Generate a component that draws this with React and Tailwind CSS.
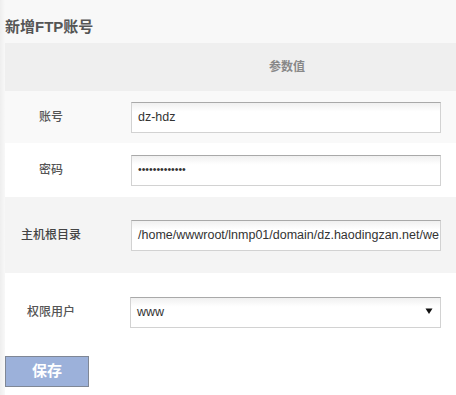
export default function App() {
  const font = { fontFamily: '"Liberation Sans", "Noto Sans CJK SC", sans-serif' };
  const inputCls =
    "h-[31px] border border-[#d2d2d2] border-t-[#a9a9a9] bg-gradient-to-b from-[#f0f0f0] to-white to-[30%] flex items-center pl-[6px] text-[12.5px] text-[#333] overflow-hidden whitespace-nowrap";
  return (
    <div className="w-[456px] h-[395px] flex bg-white overflow-hidden" style={font}>
      <div className="w-[5px] shrink-0 bg-gradient-to-r from-[#eeeeee] to-[#f8f8f8]" />
      <div className="flex-1 flex flex-col">
        <div className="h-[43px] bg-[#f8f8f8] flex items-end pb-[8px]">
          <span className="text-[15px] leading-[16px] font-bold text-[#555]">新增FTP账号</span>
        </div>
        <div className="h-[48px] bg-[#efefef] flex items-center">
          <span className="pl-[264px] text-[12px] font-bold text-[#888]">参数值</span>
        </div>
        <div className="h-[52px] bg-[#f9f9f9] flex items-center">
          <div className="w-[92px] text-center text-[12px] font-medium text-[#555]">账号</div>
          <div className={"ml-[34px] w-[310px] " + inputCls}>dz-hdz</div>
        </div>
        <div className="h-[54px] bg-white flex items-center">
          <div className="w-[92px] text-center text-[12px] font-medium text-[#555]">密码</div>
          <div className={"ml-[34px] w-[310px] " + inputCls}>
            <span className="text-[10.5px]">•••••••••••••</span>
          </div>
        </div>
        <div className="h-[76px] bg-[#f4f4f4] flex items-center">
          <div className="w-[92px] text-center text-[12px] font-medium text-[#444]">主机根目录</div>
          <div className={"ml-[34px] w-[310px] " + inputCls}>/home/wwwroot/lnmp01/domain/dz.haodingzan.net/we</div>
        </div>
        <div className="h-[78px] bg-white flex items-center">
          <div className="w-[92px] text-center text-[12px] font-medium text-[#555]">权限用户</div>
          <div className={"ml-[33px] w-[311px] justify-between pr-[7px] " + inputCls}>
            <span>www</span>
            <svg width="8" height="8" viewBox="0 0 8 8" className="mb-[2px]">
              <path d="M0.5 1.5 H7.5 L4 7 Z" fill="#111" />
            </svg>
          </div>
        </div>
        <div className="mt-[5px]">
          <div className="w-[84px] h-[31px] bg-[#9cb1da] border border-[#7f8795] flex items-center justify-center text-white font-bold text-[15px]">
            保存
          </div>
        </div>
      </div>
    </div>
  );
}
